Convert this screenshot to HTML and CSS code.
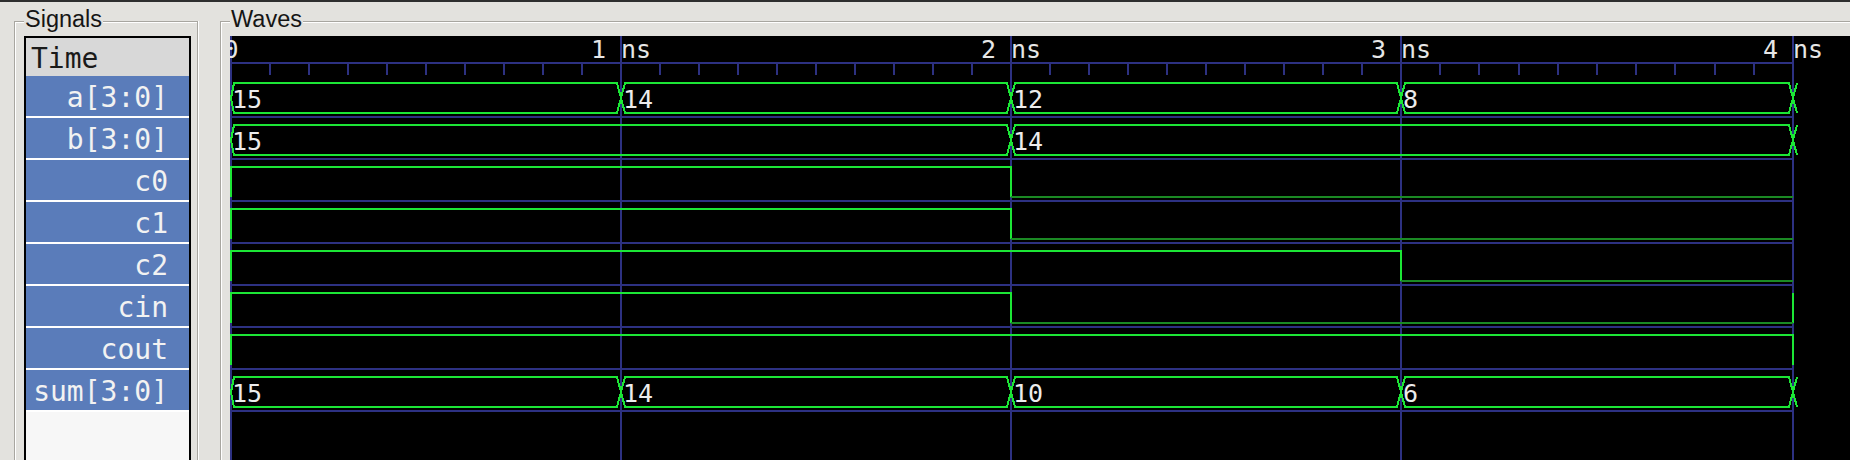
FILE: index.html
```html
<!DOCTYPE html>
<html>
<head>
<meta charset="utf-8">
<title>Waves</title>
<link rel="stylesheet" href="styles.css">
</head>
<body>
<div class="topline"></div>
<div class="panes">
  <section class="group signals">
    <div class="group-label">Signals</div>
    <div class="siglist">
      <div class="sig-head">Time</div>
      <div class="sig">a[3:0]</div>
      <div class="sig">b[3:0]</div>
      <div class="sig">c0</div>
      <div class="sig">c1</div>
      <div class="sig">c2</div>
      <div class="sig">cin</div>
      <div class="sig">cout</div>
      <div class="sig">sum[3:0]</div>
    </div>
  </section>
  <section class="group waves">
    <div class="group-label">Waves</div>
    <div class="wavecanvas">
      <svg class="wavesvg" width="1630" height="424" viewBox="0 0 1630 424" xmlns="http://www.w3.org/2000/svg">
        <g class="grid">
          <line x1="1" y1="0" x2="1" y2="424"/>
          <line x1="391" y1="0" x2="391" y2="424"/>
          <line x1="781" y1="0" x2="781" y2="424"/>
          <line x1="1171" y1="0" x2="1171" y2="424"/>
          <line x1="1563" y1="0" x2="1563" y2="424"/>
          <line x1="0" y1="27" x2="1564" y2="27"/>
          <path d="M40,28V39M79,28V39M118,28V39M157,28V39M196,28V39M235,28V39M274,28V39M313,28V39M352,28V39
                   M430,28V39M469,28V39M508,28V39M547,28V39M586,28V39M625,28V39M664,28V39M703,28V39M742,28V39
                   M820,28V39M859,28V39M898,28V39M937,28V39M976,28V39M1015,28V39M1054,28V39M1093,28V39M1132,28V39
                   M1210,28V39M1249,28V39M1289,28V39M1328,28V39M1367,28V39M1406,28V39M1445,28V39M1485,28V39M1524,28V39"/>
          <path d="M0,81H1564M0,123H1564M0,165H1564M0,207H1564M0,249H1564M0,291H1564M0,333H1564M0,375H1564"/>
        </g>
        <g class="hi">
          <!-- a[3:0] -->
          <polygon points="1,62 4,47 387,47 391,62 387,77 4,77"/>
          <polygon points="391,62 395,47 777,47 781,62 777,77 395,77"/>
          <polygon points="781,62 785,47 1167,47 1171,62 1167,77 785,77"/>
          <polygon points="1171,62 1175,47 1559,47 1563,62 1559,77 1175,77"/>
          <path d="M1563,62L1567,47M1563,62L1567,77"/>
          <!-- b[3:0] -->
          <polygon points="1,104 4,89 777,89 781,104 777,119 4,119"/>
          <polygon points="781,104 785,89 1559,89 1563,104 1559,119 785,119"/>
          <path d="M1563,104L1567,89M1563,104L1567,119"/>
          <!-- c0 -->
          <path d="M1,161V131H781V161"/>
          <!-- c1 -->
          <path d="M1,203V173H781V203"/>
          <!-- c2 -->
          <path d="M1,245V215H1171V245"/>
          <!-- cin -->
          <path d="M1,287V257H781V287"/>
          <path d="M1563,287V257"/>
          <!-- cout -->
          <path d="M1,329V299H1563V329"/>
          <!-- sum[3:0] -->
          <polygon points="1,356 4,341 387,341 391,356 387,371 4,371"/>
          <polygon points="391,356 395,341 777,341 781,356 777,371 395,371"/>
          <polygon points="781,356 785,341 1167,341 1171,356 1167,371 785,371"/>
          <polygon points="1171,356 1175,341 1559,341 1563,356 1559,371 1175,371"/>
          <path d="M1563,356L1567,341M1563,356L1567,371"/>
        </g>
        <g class="lo">
          <path d="M781,161H1563"/>
          <path d="M781,203H1563"/>
          <path d="M1171,245H1563"/>
          <path d="M781,287H1563"/>
        </g>
        <g class="axis-text">
          <text x="1" y="22">0</text>
          <text x="391" y="22">1 ns</text>
          <text x="781" y="22">2 ns</text>
          <text x="1171" y="22">3 ns</text>
          <text x="1563" y="22">4 ns</text>
        </g>
        <g class="val-text">
          <text x="2" y="72">15</text>
          <text x="393" y="72">14</text>
          <text x="783" y="72">12</text>
          <text x="1173" y="72">8</text>
          <text x="2" y="114">15</text>
          <text x="783" y="114">14</text>
          <text x="2" y="366">15</text>
          <text x="393" y="366">14</text>
          <text x="783" y="366">10</text>
          <text x="1173" y="366">6</text>
        </g>
      </svg>
    </div>
  </section>
</div>
</body>
</html>
```
FILE: styles.css
```css
html, body {
  margin: 0;
  padding: 0;
}
body {
  width: 1850px;
  height: 460px;
  overflow: hidden;
  background: #e3e2de;
  font-family: "Liberation Sans", Arial, sans-serif;
}
.topline {
  height: 2px;
  background: #2e2e2e;
}
.panes {
  display: flex;
  align-items: flex-start;
  gap: 22px;
  margin-top: 19px;
  padding-left: 14px;
}
.group {
  box-sizing: border-box;
  border: 1px solid #a8a6a0;
  border-bottom: 0;
  box-shadow: inset 1px 1px 0 #ffffff, 1px 0 0 #ffffff;
  padding: 0 6px 0 9px;
  height: 439px;
  flex: none;
}
.signals {
  width: 184px;
}
.waves {
  width: 1640px;
  border-right: 0;
  padding-right: 0;
}
.group-label {
  display: block;
  width: max-content;
  height: 24px;
  margin-top: -15px;
  padding: 0 1px;
  background: #e3e2de;
  color: #151515;
  font-size: 23.5px;
  line-height: 24px;
}
.siglist {
  box-sizing: border-box;
  width: 167px;
  height: 424px;
  margin-top: 5px;
  border: 2px solid #000;
  border-bottom: 0;
  background: #f7f7f7;
  font-family: "DejaVu Sans Mono", monospace;
  font-size: 28px;
}
.sig-head {
  box-sizing: border-box;
  height: 38px;
  padding: 4px 0 0 5px;
  line-height: 34px;
  background: #d8d8d8;
  color: #1a1a1a;
}
.sig {
  box-sizing: border-box;
  height: 42px;
  padding: 4px 21px 0 0;
  line-height: 36px;
  text-align: right;
  background: #5a7cba;
  color: #f2f2f2;
  border-bottom: 2px solid #ffffff;
  white-space: pre;
}
.wavecanvas {
  width: 1630px;
  height: 424px;
  margin-top: 5px;
  background: #000;
}
.wavesvg {
  display: block;
}
.grid line, .grid path {
  stroke: #2d3182;
  stroke-width: 2;
  fill: none;
  shape-rendering: crispEdges;
}
.hi polygon, .hi path {
  stroke: #1ce636;
  stroke-width: 2;
  fill: none;
  shape-rendering: crispEdges;
}
.lo path {
  stroke: #1b8a24;
  stroke-width: 2;
  fill: none;
  shape-rendering: crispEdges;
}
.axis-text text {
  font-family: "DejaVu Sans Mono", monospace;
  font-size: 25px;
  fill: #e6e6e6;
  text-anchor: middle;
  white-space: pre;
}
.val-text text {
  font-family: "DejaVu Sans Mono", monospace;
  font-size: 25px;
  fill: #ececec;
}
```
